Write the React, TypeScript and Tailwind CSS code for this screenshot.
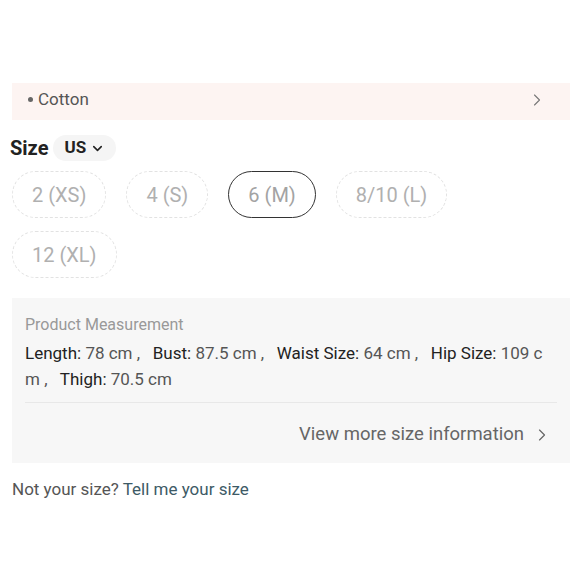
import { ChevronDown, ChevronRight } from "lucide-react";

const sizes = [
  { label: "2 (XS)", selected: false },
  { label: "4 (S)", selected: false },
  { label: "6 (M)", selected: true },
  { label: "8/10 (L)", selected: false },
  { label: "12 (XL)", selected: false },
];

const measurements = [
  { name: "Length", value: "78 cm" },
  { name: "Bust", value: "87.5 cm" },
  { name: "Waist Size", value: "64 cm" },
  { name: "Hip Size", value: "109 cm" },
  { name: "Thigh", value: "70.5 cm" },
];

export default function App() {
  return (
    <div
      className="min-h-screen bg-white pl-3 pr-[10px] pt-[83px] text-[#222]"
      style={{ fontFamily: 'Roboto, "Noto Sans CJK SC", sans-serif' }}
    >
      {/* material */}
      <div className="flex h-[37px] items-center justify-between bg-[#fdf4f2] pl-4 pr-[23px]">
        <span className="-mt-1 flex items-center text-[17px] text-[#555]">
          <span className="mr-[5px] h-[5px] w-[5px] rounded-full bg-[#666]" />
          Cotton
        </span>
        <ChevronRight className="-mt-1 h-5 w-5 text-[#777]" strokeWidth={1.3} />
      </div>

      {/* size header */}
      <div className="mt-[15px] flex items-center gap-[5px]">
        <span className="-ml-0.5 text-[20px] font-bold leading-none text-[#222]">Size</span>
        <button
          type="button"
          className="flex h-[26px] items-center gap-1 rounded-full bg-[#f5f5f5] px-[11px] text-[17px] font-bold text-[#222]"
        >
          US
          <ChevronDown className="h-[15px] w-[15px]" strokeWidth={2.5} />
        </button>
      </div>

      {/* size chips */}
      <div className="mt-[10px] flex flex-wrap gap-x-5 gap-y-[13px]">
        {sizes.map((s) => (
          <div
            key={s.label}
            className={
              s.selected
                ? "flex h-[47px] items-center rounded-full border-[1.5px] border-[#333] px-[19px] text-[20px] text-[#a3a3a3]"
                : "flex h-[47px] items-center rounded-full border border-dashed border-[#e2e2e2] px-[19px] text-[20px] text-[#b0b0b0]"
            }
          >
            {s.label}
          </div>
        ))}
      </div>

      {/* measurement */}
      <div className="mt-5 bg-[#f7f7f7] px-[13px] pb-[14px] pt-[16px]">
        <div className="text-[16px] leading-[22px] text-[#999]">Product Measurement</div>
        <p className="mt-[4px] break-all pr-2 text-[17px] leading-[26px]">
          {measurements.map((m, i) => (
            <span key={m.name}>
              <span className="text-[#222]">{m.name}:</span>
              <span className="text-[#555]">
                {" "}
                {m.value}
                {i < measurements.length - 1 ? " ,\u00a0\u00a0 " : ""}
              </span>
            </span>
          ))}
        </p>
        <div className="mt-[10px] border-t border-[#e8e8e8]" />
        <div className="mt-[18px] flex items-center justify-end gap-2 pr-[5px] text-[18.5px] text-[#666]">
          View more size information
          <ChevronRight className="h-5 w-5" strokeWidth={1.4} />
        </div>
      </div>

      <div className="mt-[14px] text-[17px] text-[#555]">
        Not your size? <span className="text-[#3d5a66]">Tell me your size</span>
      </div>
    </div>
  );
}
